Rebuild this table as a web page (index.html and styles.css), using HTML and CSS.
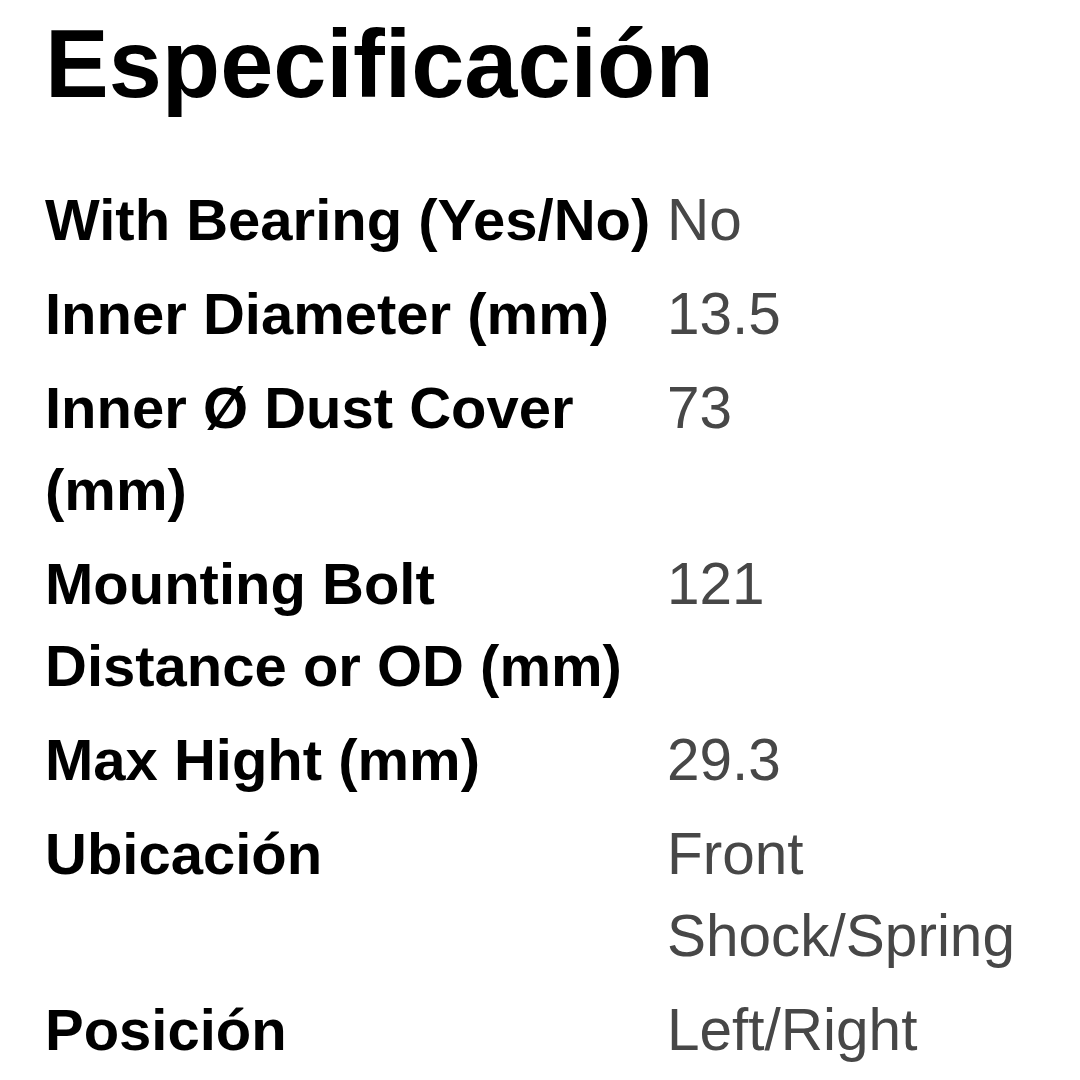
FILE: index.html
```html
<!DOCTYPE html>
<html lang="es">
<head>
<meta charset="utf-8">
<title>Especificación</title>
<link rel="stylesheet" href="styles.css">
</head>
<body>
<main class="spec">
  <h1 class="spec-title">Especificación</h1>
  <table class="spec-table">
    <tbody>
      <tr><th>With Bearing (Yes/No)</th><td>No</td></tr>
      <tr><th>Inner Diameter (mm)</th><td>13.5</td></tr>
      <tr><th>Inner Ø Dust Cover (mm)</th><td>73</td></tr>
      <tr><th>Mounting Bolt Distance or OD (mm)</th><td>121</td></tr>
      <tr><th>Max Hight (mm)</th><td>29.3</td></tr>
      <tr><th>Ubicación</th><td>Front Shock/Spring</td></tr>
      <tr><th>Posición</th><td>Left/Right</td></tr>
    </tbody>
  </table>
</main>
</body>
</html>
```
FILE: styles.css
```css
html, body {
  margin: 0;
  padding: 0;
  background: #ffffff;
}

body {
  font-family: "Liberation Sans", Arial, sans-serif;
  color: #000000;
}

.spec {
  padding: 10px 0 0 45px;
}

.spec-title {
  margin: 0 0 55px 0;
  font-size: 95.5px;
  line-height: 108px;
  font-weight: 700;
  letter-spacing: 0;
}

.spec-table {
  border-collapse: collapse;
  font-size: 58px;
  line-height: 82px;
}

.spec-table th,
.spec-table td {
  padding: 6px 0;
  vertical-align: top;
  text-align: left;
}

.spec-table th {
  width: 622px;
  font-weight: 700;
  color: #000000;
}

.spec-table td {
  width: 370px;
  font-weight: 400;
  color: #474747;
}

.spec-table td {
  font-size: 58.5px;
}
```
